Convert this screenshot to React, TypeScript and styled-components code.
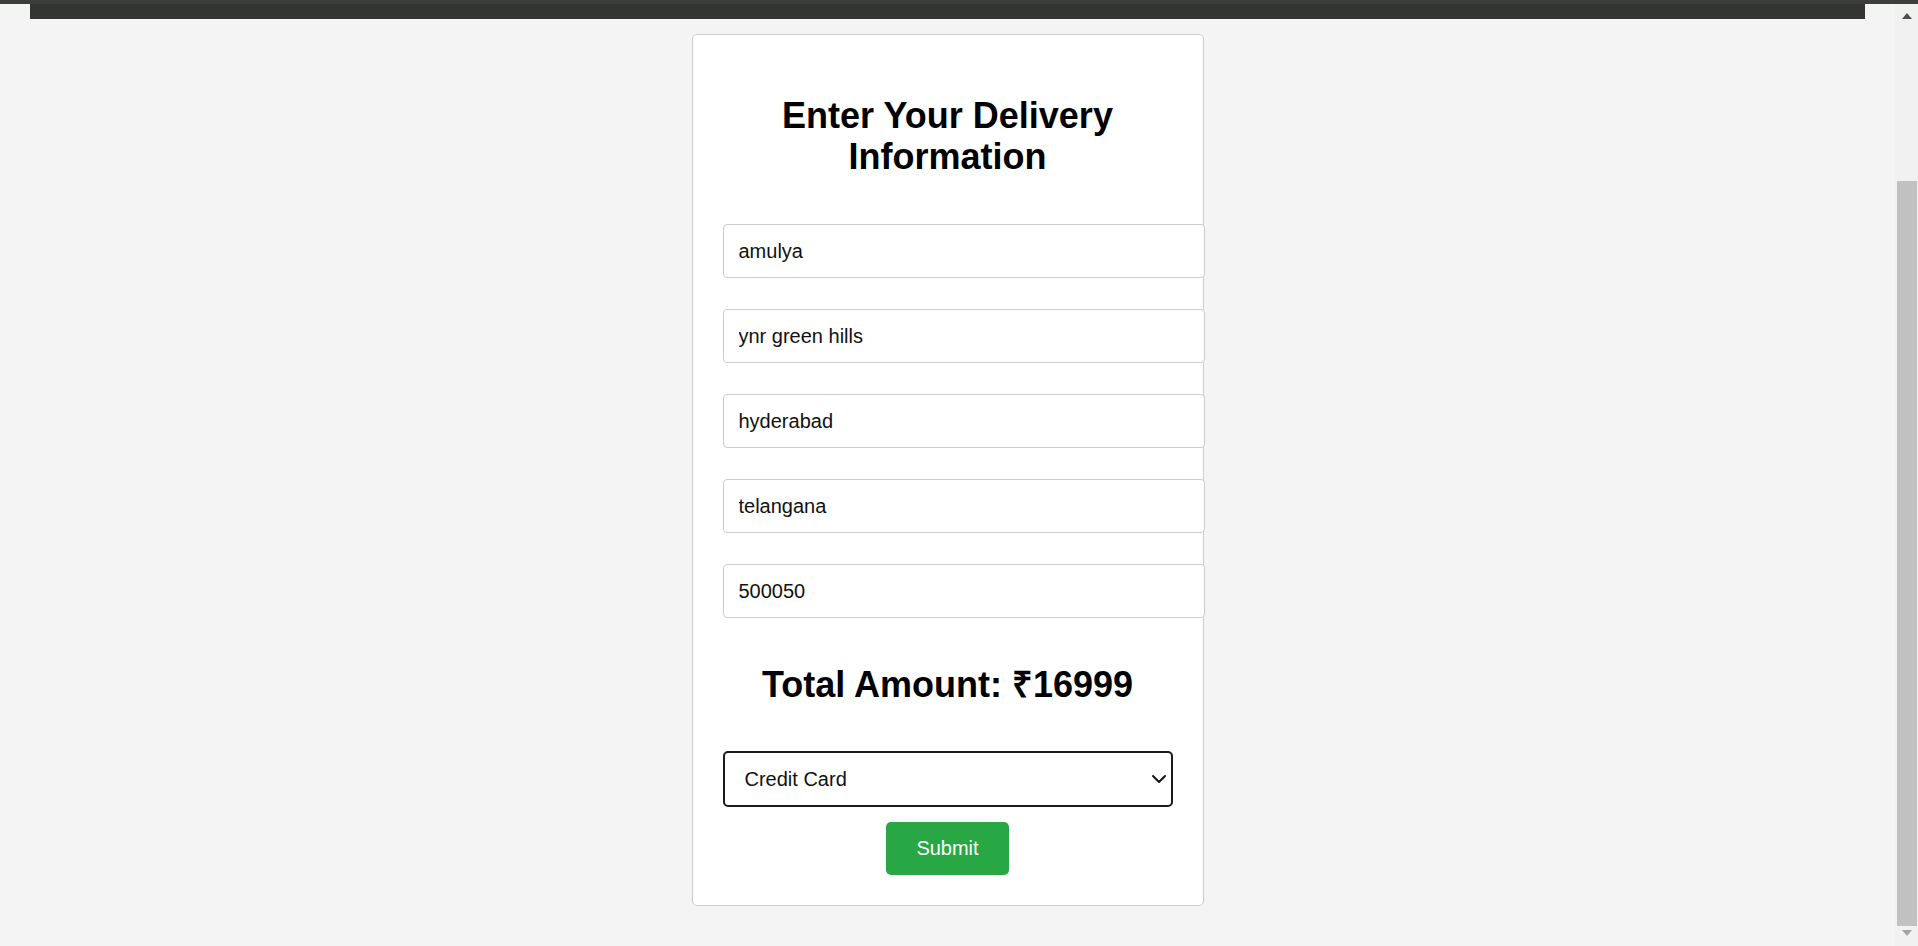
import styled, { createGlobalStyle } from "styled-components";
import { ChevronDown } from "lucide-react";

const GlobalStyle = createGlobalStyle`
  html, body {
    margin: 0;
    padding: 0;
    background-color: #f4f4f4;
    font-family: "Liberation Sans", Arial, sans-serif;
    overflow: hidden;
  }
`;

const fields = [
  { name: "name", value: "amulya" },
  { name: "address", value: "ynr green hills" },
  { name: "city", value: "hyderabad" },
  { name: "state", value: "telangana" },
  { name: "pincode", value: "500050" },
];

function App() {
  return (
    <>
      <GlobalStyle />
      <TopEdge />
      <Page>
        <HeaderBar />
        <CheckoutCard onSubmit={(e) => e.preventDefault()}>
          <Title>Enter Your Delivery Information</Title>
          <FieldList>
            {fields.map((f) => (
              <Field key={f.name} name={f.name} type="text" defaultValue={f.value} />
            ))}
          </FieldList>
          <Total>Total Amount: ₹16999</Total>
          <SelectWrap>
            <PaymentSelect defaultValue="credit">
              <option value="credit">Credit Card</option>
              <option value="debit">Debit Card</option>
              <option value="upi">UPI</option>
              <option value="cod">Cash on Delivery</option>
            </PaymentSelect>
            <SelectChevron size={24} strokeWidth={2} />
          </SelectWrap>
          <SubmitButton type="submit">Submit</SubmitButton>
        </CheckoutCard>
      </Page>

      <Scrollbar>
        <ScrollArrow $dir="up" />
        <ScrollTrack>
          <ScrollThumb />
        </ScrollTrack>
        <ScrollArrow $dir="down" />
      </Scrollbar>
    </>
  );
}

const TopEdge = styled.div`
  height: 4px;
  background-color: #3a3f3a;
`;

const Page = styled.div`
  margin-right: 23px;
  padding-bottom: 40px;
`;

const HeaderBar = styled.div`
  height: 15px;
  margin: 0 30px;
  background-color: #333;
`;

const CheckoutCard = styled.form`
  width: 450px;
  margin: 15px auto 0;
  padding: 30px;
  background-color: #fff;
  border: 1px solid #ccc;
  border-radius: 5px;
  display: flex;
  flex-direction: column;
`;

const Title = styled.h2`
  margin: 30px 0 47px;
  font-size: 36px;
  line-height: 41px;
  font-weight: bold;
  text-align: center;
  color: #000;
`;

const FieldList = styled.div`
  display: flex;
  flex-direction: column;
  gap: 31px;
`;

const Field = styled.input`
  box-sizing: content-box;
  width: 100%;
  height: 24px;
  padding: 14px 15px;
  border: 1px solid #ccc;
  border-radius: 4px;
  font-family: "Liberation Sans", Arial, sans-serif;
  font-size: 20px;
  color: #111;
  background-color: #fff;
  outline: none;
`;

const Total = styled.h2`
  margin: 46px 0 46px;
  font-size: 36px;
  line-height: 41px;
  height: 41px;
  font-weight: bold;
  text-align: center;
  color: #000;
`;

const SelectWrap = styled.div`
  position: relative;
  display: flex;
`;

const PaymentSelect = styled.select`
  appearance: none;
  box-sizing: border-box;
  width: 100%;
  height: 56px;
  padding: 0 40px 0 20px;
  border: 2px solid #1b1b1b;
  border-radius: 5px;
  font-family: "Liberation Sans", Arial, sans-serif;
  font-size: 20px;
  color: #111;
  background-color: #fff;
  outline: none;
`;

const SelectChevron = styled(ChevronDown)`
  position: absolute;
  right: 2px;
  top: 50%;
  transform: translateY(-50%);
  color: #111;
  pointer-events: none;
`;

const SubmitButton = styled.button`
  align-self: center;
  margin-top: 15px;
  padding: 15px 30px;
  border: none;
  border-radius: 5px;
  background-color: #28a745;
  color: #fff;
  font-family: "Liberation Sans", Arial, sans-serif;
  font-size: 20px;
  line-height: 23px;
  cursor: pointer;
`;

const Scrollbar = styled.div`
  position: fixed;
  top: 4px;
  right: 0;
  bottom: 0;
  width: 23px;
  display: flex;
  flex-direction: column;
  background-color: #f1f1f1;
`;

const ScrollArrow = styled.div<{ $dir: "up" | "down" }>`
  height: ${(p) => (p.$dir === "up" ? "23px" : "16px")};
  display: flex;
  justify-content: center;
  align-items: ${(p) => (p.$dir === "up" ? "center" : "flex-start")};
  padding-top: ${(p) => (p.$dir === "up" ? "0" : "4px")};

  &::before {
    content: "";
    width: 0;
    height: 0;
    border-left: 5px solid transparent;
    border-right: 5px solid transparent;
    ${(p) =>
      p.$dir === "up"
        ? "border-bottom: 6px solid #505050;"
        : "border-top: 6px solid #a3a3a3;"}
  }
`;

const ScrollTrack = styled.div`
  flex: 1;
  display: flex;
  flex-direction: column;
  justify-content: flex-end;
  padding: 0 1px 0 2px;
`;

const ScrollThumb = styled.div`
  height: 745px;
  background-color: #c1c1c1;
`;

export default App;
